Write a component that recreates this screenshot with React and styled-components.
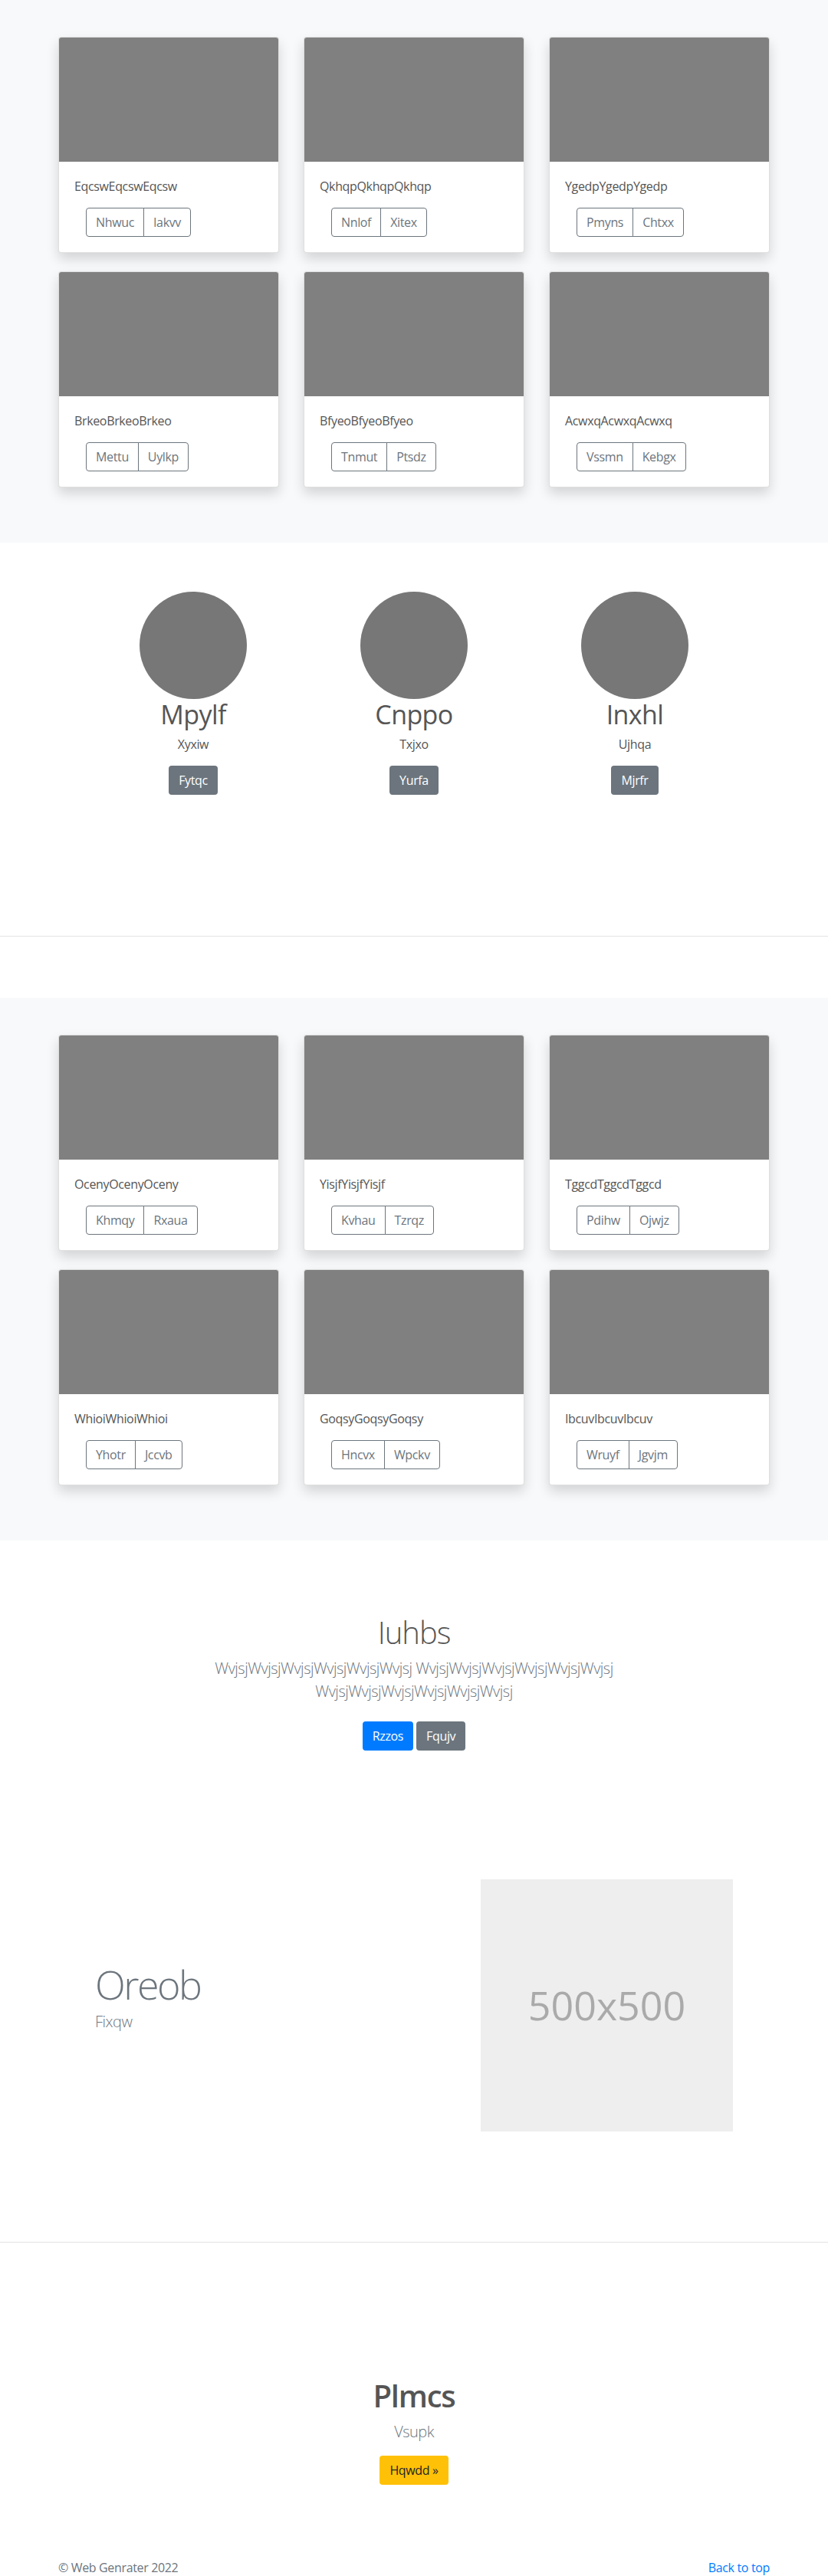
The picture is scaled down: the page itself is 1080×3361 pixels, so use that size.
import React from 'react';
import styled, { createGlobalStyle } from 'styled-components';

const GlobalStyle = createGlobalStyle`
  * { box-sizing: border-box; }
  body {
    margin: 0;
    font-family: "Open Sans", "Liberation Sans", sans-serif;
    font-size: 16px;
    line-height: 1.5;
    letter-spacing: -0.35px;
    color: #212529;
    background: #ffffff;
  }
`;

const albumOne = [
  { text: 'EqcswEqcswEqcsw', a: 'Nhwuc', b: 'Iakvv' },
  { text: 'QkhqpQkhqpQkhqp', a: 'Nnlof', b: 'Xitex' },
  { text: 'YgedpYgedpYgedp', a: 'Pmyns', b: 'Chtxx' },
  { text: 'BrkeoBrkeoBrkeo', a: 'Mettu', b: 'Uylkp' },
  { text: 'BfyeoBfyeoBfyeo', a: 'Tnmut', b: 'Ptsdz' },
  { text: 'AcwxqAcwxqAcwxq', a: 'Vssmn', b: 'Kebgx' },
];

const albumTwo = [
  { text: 'OcenyOcenyOceny', a: 'Khmqy', b: 'Rxaua' },
  { text: 'YisjfYisjfYisjf', a: 'Kvhau', b: 'Tzrqz' },
  { text: 'TggcdTggcdTggcd', a: 'Pdihw', b: 'Ojwjz' },
  { text: 'WhioiWhioiWhioi', a: 'Yhotr', b: 'Jccvb' },
  { text: 'GoqsyGoqsyGoqsy', a: 'Hncvx', b: 'Wpckv' },
  { text: 'IbcuvIbcuvIbcuv', a: 'Wruyf', b: 'Jgvjm' },
];

const team = [
  { name: 'Mpylf', role: 'Xyxiw', action: 'Fytqc' },
  { name: 'Cnppo', role: 'Txjxo', action: 'Yurfa' },
  { name: 'Inxhl', role: 'Ujhqa', action: 'Mjrfr' },
];

const Album = ({ items }) => (
  <AlbumSection>
    <Container>
      <CardGrid>
        {items.map((item) => (
          <Card key={item.text}>
            <Thumb />
            <CardBody>
              <CardText>{item.text}</CardText>
              <BtnGroup>
                <OutlineBtn>{item.a}</OutlineBtn>
                <OutlineBtn>{item.b}</OutlineBtn>
              </BtnGroup>
            </CardBody>
          </Card>
        ))}
      </CardGrid>
    </Container>
  </AlbumSection>
);

export default function App() {
  return (
    <>
      <GlobalStyle />
      <Album items={albumOne} />

      <TeamSection>
        <TeamGrid>
          {team.map((m) => (
            <Member key={m.name}>
              <Avatar />
              <MemberName>{m.name}</MemberName>
              <MemberRole>{m.role}</MemberRole>
              <SolidBtn $variant="secondary">{m.action}</SolidBtn>
            </Member>
          ))}
        </TeamGrid>
      </TeamSection>
      <Divider $gap={80} />

      <Album items={albumTwo} />

      <Jumbo>
        <JumboTitle>Iuhbs</JumboTitle>
        <Lead $width={610} $spaced>
          WvjsjWvjsjWvjsjWvjsjWvjsjWvjsj WvjsjWvjsjWvjsjWvjsjWvjsjWvjsj WvjsjWvjsjWvjsjWvjsjWvjsjWvjsj
        </Lead>
        <ButtonRow>
          <SolidBtn $variant="primary">Rzzos</SolidBtn>
          <SolidBtn $variant="secondary">Fqujv</SolidBtn>
        </ButtonRow>
      </Jumbo>

      <Feature>
        <FeatureRow>
          <div>
            <FeatureTitle>Oreob</FeatureTitle>
            <Lead $spaced>Fixqw</Lead>
          </div>
          <Placeholder>500x500</Placeholder>
        </FeatureRow>
      </Feature>
      <Divider $gap={0} />

      <Cta>
        <CtaTitle>Plmcs</CtaTitle>
        <Lead $spaced>Vsupk</Lead>
        <SolidBtn $variant="warning">Hqwdd »</SolidBtn>
      </Cta>

      <Footer>
        <FooterRow>
          <span>© Web Genrater 2022</span>
          <TopLink href="#">Back to top</TopLink>
        </FooterRow>
      </Footer>
    </>
  );
}

const Container = styled.div`
  max-width: 960px;
  margin: 0 auto;
  padding: 0 16px;
`;

const AlbumSection = styled.section`
  background: #f8f9fa;
  padding: 48px 0 72px;
`;

const CardGrid = styled.div`
  display: grid;
  grid-template-columns: repeat(3, 1fr);
  column-gap: 32px;
  row-gap: 24px;
`;

const Card = styled.div`
  background: #ffffff;
  border: 1px solid rgba(0, 0, 0, 0.125);
  border-radius: 4px;
  overflow: hidden;
  box-shadow: 0 8px 16px rgba(0, 0, 0, 0.15);
`;

const Thumb = styled.div`
  height: 162px;
  background: #808080;
`;

const CardBody = styled.div`
  padding: 20px;
`;

const CardText = styled.p`
  margin: 0 0 16px;
  color: #555;
`;

const BtnGroup = styled.div`
  display: inline-flex;
  margin-left: 15px;
`;

const OutlineBtn = styled.button`
  font-family: inherit;
  font-size: 16px;
  line-height: 1.5;
  letter-spacing: inherit;
  padding: 6px 12px;
  background: transparent;
  color: #6c757d;
  border: 1px solid #6c757d;
  border-radius: 0;
  &:first-child { border-radius: 4px 0 0 4px; }
  &:last-child { border-radius: 0 4px 4px 0; margin-left: -1px; }
`;

const SolidBtn = styled.button`
  font-family: inherit;
  font-size: 16px;
  line-height: 1.5;
  letter-spacing: inherit;
  padding: 6px 12px;
  border: 1px solid transparent;
  border-radius: 4px;
  background: ${(p) => (p.$variant === 'primary' ? '#007bff' : p.$variant === 'warning' ? '#ffc107' : '#6c757d')};
  color: ${(p) => (p.$variant === 'warning' ? '#212529' : '#ffffff')};
`;

const TeamSection = styled.section`
  padding: 64px 0 184px;
`;

const TeamGrid = styled.div`
  max-width: 960px;
  margin: 0 auto;
  padding: 0 48px;
  display: grid;
  grid-template-columns: repeat(3, 1fr);
`;

const Member = styled.div`
  display: flex;
  flex-direction: column;
  align-items: center;
  text-align: center;
`;

const Avatar = styled.div`
  width: 140px;
  height: 140px;
  border-radius: 50%;
  background: #777777;
`;

const MemberName = styled.h2`
  margin: 0 0 6px;
  font-size: 34px;
  font-weight: 400;
  line-height: 1.2;
  letter-spacing: -0.6px;
  color: #555;
`;

const MemberRole = styled.p`
  margin: 0 0 16px;
  color: #555;
`;

const Divider = styled.hr`
  margin: 0 0 ${(p) => p.$gap}px;
  border: 0;
  border-top: 1px solid #e3e3e3;
`;

const Jumbo = styled.section`
  padding: 96px 0;
  text-align: center;
`;

const JumboTitle = styled.h1`
  margin: 0 0 8px;
  font-size: 40px;
  font-weight: 300;
  line-height: 1.2;
  letter-spacing: -1px;
  color: #555;
`;

const Lead = styled.p`
  margin: 0 ${(p) => (p.$width ? 'auto' : '0')} ${(p) => (p.$spaced ? '16px' : '0')};
  max-width: ${(p) => (p.$width ? `${p.$width}px` : 'none')};
  font-size: 20px;
  font-weight: 300;
  line-height: 1.5;
  letter-spacing: -0.5px;
  color: #6c757d;
`;

const ButtonRow = styled.div`
  display: flex;
  justify-content: center;
  gap: 4px;
  padding: 8px 0;
`;

const Feature = styled.section`
  padding: 64px 0 144px;
`;

const FeatureRow = styled.div`
  max-width: 960px;
  margin: 0 auto;
  padding: 0 64px;
  display: grid;
  grid-template-columns: 1fr 329px;
  align-items: center;
`;

const FeatureTitle = styled.h2`
  margin: 0 0 8px;
  font-size: 52px;
  font-weight: 300;
  line-height: 1;
  letter-spacing: -2.5px;
  color: #6c757d;
`;

const Placeholder = styled.div`
  width: 329px;
  height: 329px;
  background: #eeeeee;
  color: #aaaaaa;
  display: flex;
  align-items: center;
  justify-content: center;
  font-size: 52px;
  letter-spacing: 0;
`;

const Cta = styled.section`
  padding: 176px 0 48px;
  text-align: center;
`;

const CtaTitle = styled.h1`
  margin: 0 0 8px;
  font-size: 40px;
  font-weight: 600;
  line-height: 1.2;
  letter-spacing: -1.2px;
  color: #555;
`;

const Footer = styled.footer`
  padding: 48px 0;
  color: #6c757d;
`;

const FooterRow = styled(Container)`
  display: flex;
  justify-content: space-between;
`;

const TopLink = styled.a`
  color: #007bff;
  text-decoration: none;
`;
